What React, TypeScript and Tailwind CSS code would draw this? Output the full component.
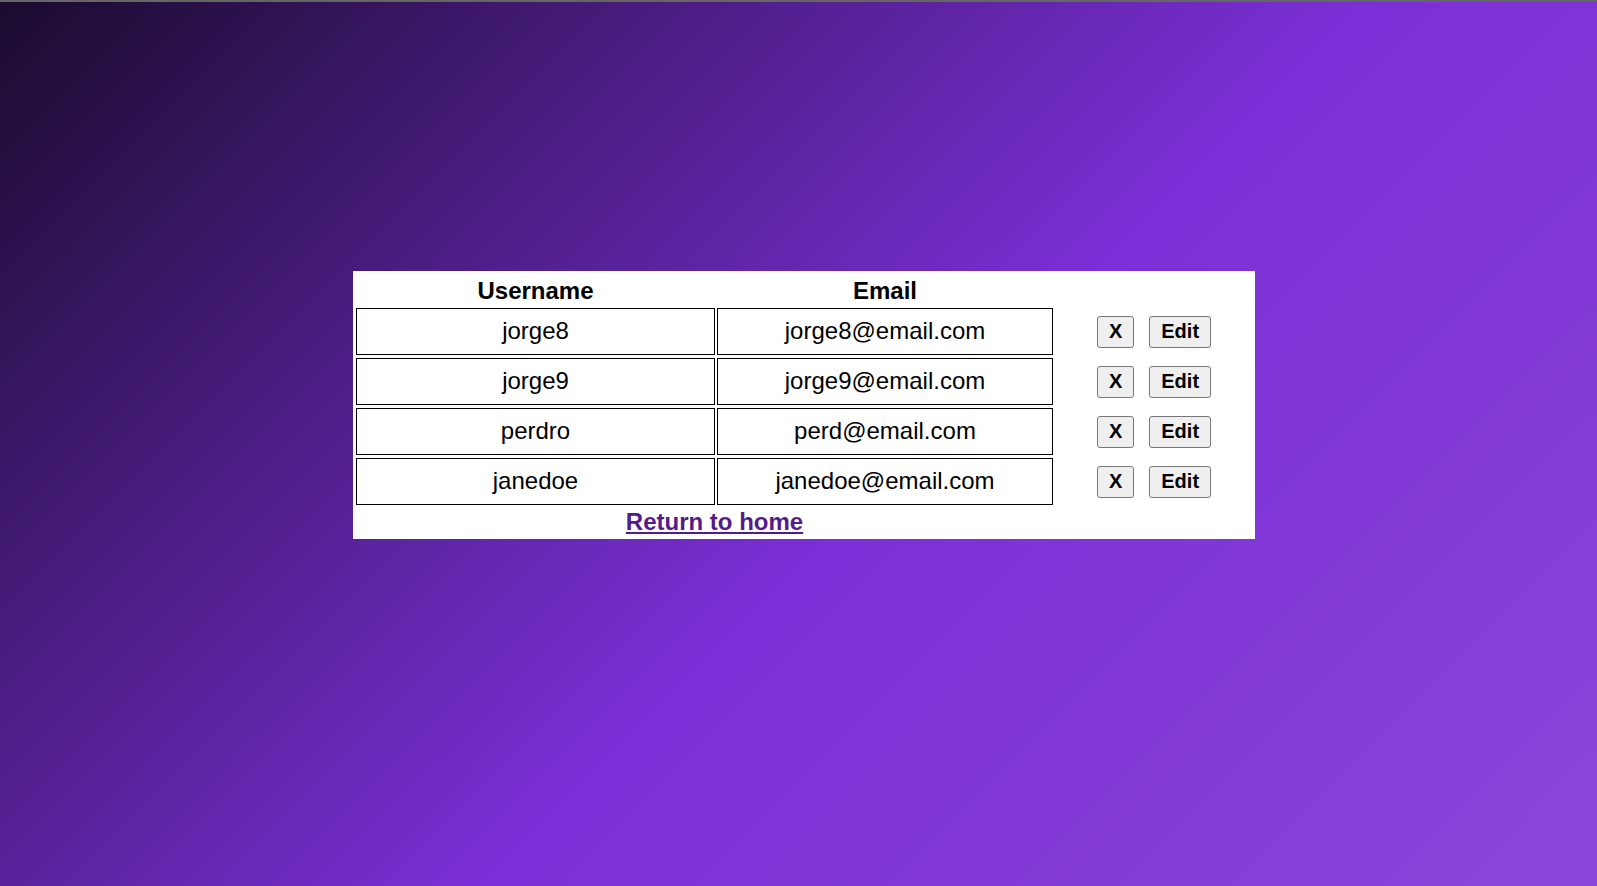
import React from "react";

const users = [
  { username: "jorge8", email: "jorge8@email.com" },
  { username: "jorge9", email: "jorge9@email.com" },
  { username: "perdro", email: "perd@email.com" },
  { username: "janedoe", email: "janedoe@email.com" },
];

function Btn({ children }: { children: React.ReactNode }) {
  return (
    <button className="h-[32px] px-[11px] pb-[1px] bg-[#efefef] border border-[#767676] rounded-[3px] text-[20px] font-bold text-black leading-none">
      {children}
    </button>
  );
}

export default function App() {
  return (
    <div
      className="min-h-screen w-full border-t-2 border-[#666666] bg-[linear-gradient(135deg,#1a0b2e_0%,#7b2fd6_55%,#8b46d9_100%)] pt-[269px] pl-[353px] text-black"
      style={{ fontFamily: '"Liberation Sans", Arial, sans-serif', minHeight: "886px" }}
    >
      <div className="w-[902px] bg-white pt-[2px] pb-[2px] pl-[3px] pr-[2px] flex flex-col text-[24px]">
        <div className="grid grid-cols-[359px_336px_198px] gap-x-[2px] h-[33px] pb-[6px] items-center font-bold">
          <div className="text-center">Username</div>
          <div className="text-center">Email</div>
          <div />
        </div>
        <div className="flex flex-col gap-[3px] mt-[2px]">
          {users.map((u) => (
            <div key={u.username} className="grid grid-cols-[359px_336px_198px] gap-x-[2px] h-[47px]">
              <div className="border border-black flex items-center justify-center pb-[2px]">{u.username}</div>
              <div className="border border-black flex items-center justify-center pb-[2px]">{u.email}</div>
              <div className="flex items-center justify-center gap-[15px]">
                <Btn>X</Btn>
                <Btn>Edit</Btn>
              </div>
            </div>
          ))}
        </div>
        <div className="grid grid-cols-[359px_336px_198px] gap-x-[2px] h-[32px]">
          <div className="col-span-2 flex items-start justify-center pl-[20px] -mt-[1px]">
            <a href="#" className="font-bold underline text-[#551a8b]">
              Return to home
            </a>
          </div>
        </div>
      </div>
    </div>
  );
}
